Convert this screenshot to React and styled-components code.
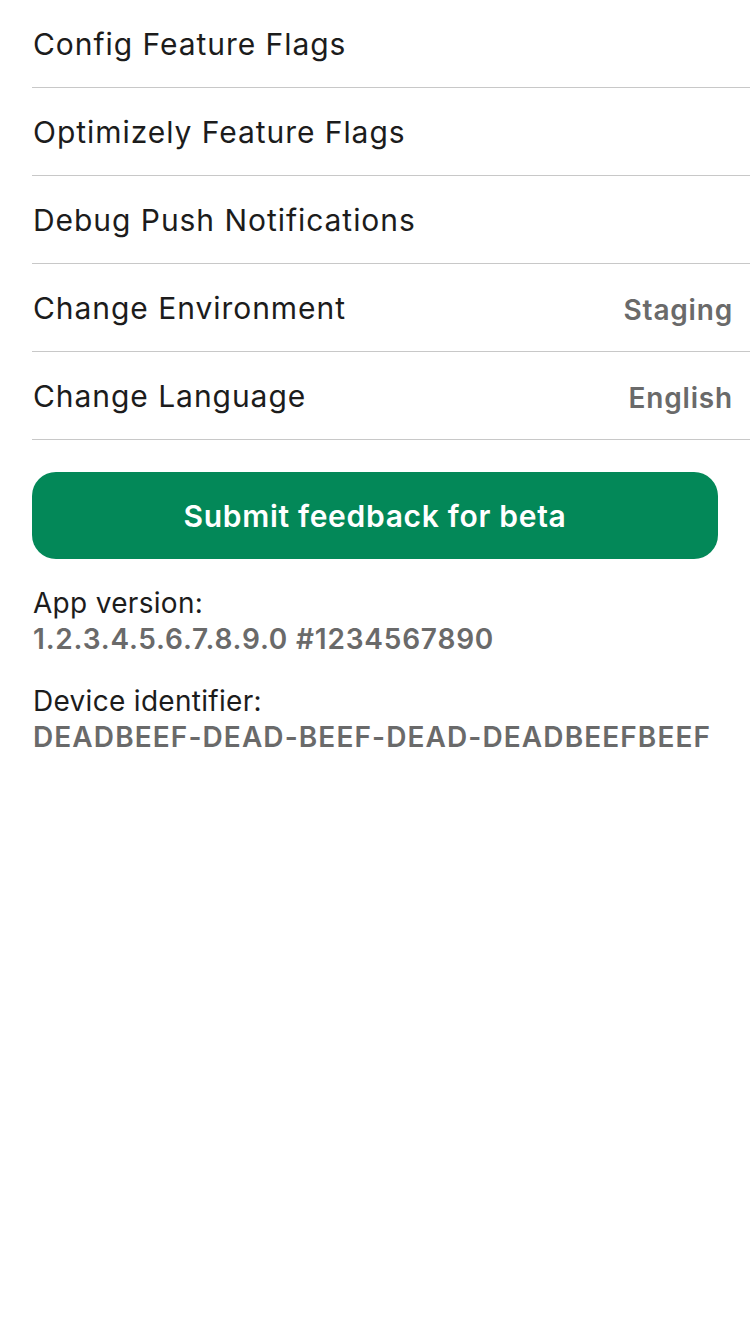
import React from "react";
import styled, { createGlobalStyle } from "styled-components";

const GlobalStyle = createGlobalStyle`
  html, body {
    margin: 0;
    padding: 0;
    background: #ffffff;
  }
  body {
    font-family: Inter, "Noto Sans", sans-serif;
    -webkit-font-smoothing: antialiased;
  }
`;

const Page = styled.div`
  width: 750px;
  min-height: 1334px;
  background: #fff;
`;

const List = styled.div`
  padding-left: 32px;
`;

const Row = styled.div`
  height: 87px;
  display: flex;
  align-items: center;
  justify-content: space-between;
  border-bottom: 1px solid #c8c8c8;
  padding-right: 17px;
`;

const RowLabel = styled.span`
  font-size: 30px;
  color: #1c1c1c;
  padding-left: 1px;
  letter-spacing: 0.95px;
`;

const RowValue = styled.span`
  font-size: 28px;
  font-weight: 600;
  color: #6a6a6a;
  margin-top: 4px;
  letter-spacing: 0.8px;
`;

const Footer = styled.div`
  padding: 32px 32px 0 32px;
`;

const FeedbackButton = styled.button`
  width: 686px;
  height: 87px;
  border: none;
  border-radius: 24px;
  background: #038858;
  color: #ffffff;
  font-family: Inter, "Noto Sans", sans-serif;
  font-size: 30px;
  font-weight: 600;
  letter-spacing: 0.7px;
  cursor: pointer;
  padding: 0;
`;

const Info = styled.div`
  margin-top: 26px;
  display: flex;
  flex-direction: column;
  gap: 26px;
`;

const InfoBlock = styled.div`
  display: flex;
  flex-direction: column;
  padding-left: 1px;
`;

const InfoLabel = styled.span`
  font-size: 28px;
  line-height: 36px;
  color: #1c1c1c;
  letter-spacing: 0.3px;
`;

const InfoValue = styled.span`
  font-size: 28px;
  line-height: 36px;
  font-weight: 600;
  color: #6a6a6a;
  letter-spacing: ${(p) => (p.$wide ? "1.1px" : "0.8px")};
`;

const rows = [
  { label: "Config Feature Flags" },
  { label: "Optimizely Feature Flags" },
  { label: "Debug Push Notifications" },
  { label: "Change Environment", value: "Staging" },
  { label: "Change Language", value: "English" },
];

export default function App() {
  return (
    <Page>
      <GlobalStyle />
      <List>
        {rows.map((r) => (
          <Row key={r.label}>
            <RowLabel>{r.label}</RowLabel>
            {r.value && <RowValue>{r.value}</RowValue>}
          </Row>
        ))}
      </List>
      <Footer>
        <FeedbackButton>Submit feedback for beta</FeedbackButton>
        <Info>
          <InfoBlock>
            <InfoLabel>App version:</InfoLabel>
            <InfoValue>1.2.3.4.5.6.7.8.9.0 #1234567890</InfoValue>
          </InfoBlock>
          <InfoBlock>
            <InfoLabel>Device identifier:</InfoLabel>
            <InfoValue $wide>DEADBEEF-DEAD-BEEF-DEAD-DEADBEEFBEEF</InfoValue>
          </InfoBlock>
        </Info>
      </Footer>
    </Page>
  );
}
